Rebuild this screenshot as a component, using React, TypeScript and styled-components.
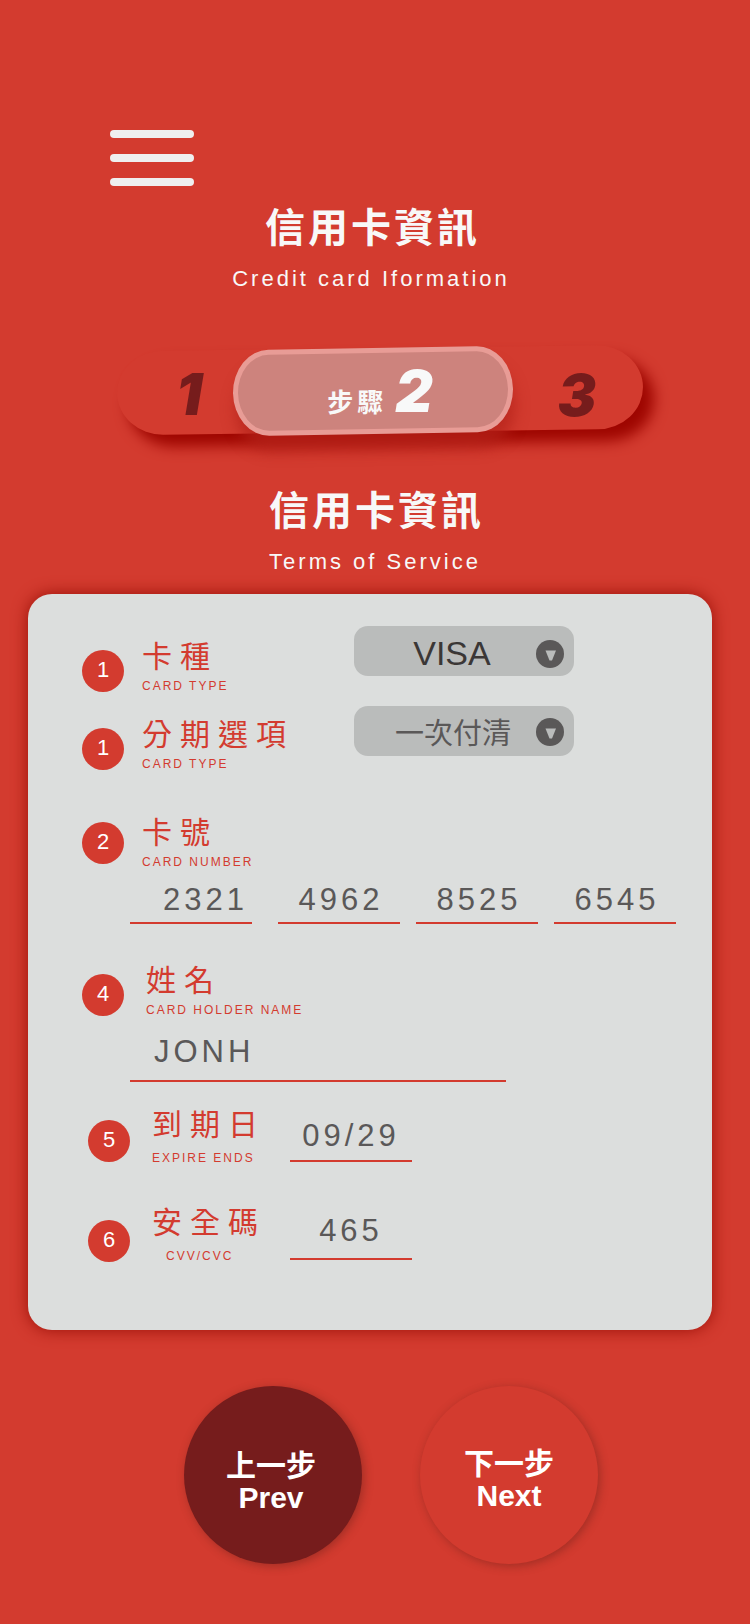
import React from 'react';
import styled, { createGlobalStyle } from 'styled-components';

const red = '#d33b2f';
const maroon = '#761c1c';
const paper = '#dcdedd';
const ink = '#5a5858';
const sans = '"Liberation Sans", Arial, "Noto Sans CJK TC", sans-serif';
const cjk = '"Noto Sans CJK TC", "Liberation Sans", sans-serif';

const GlobalStyle = createGlobalStyle`
  * { box-sizing: border-box; }
  body { margin: 0; background: ${red}; font-family: ${sans}; }
  h1, h2, p, ol { margin: 0; padding: 0; }
  button, input, select { font: inherit; color: inherit; border: 0; margin: 0; padding: 0; }
`;

const Page = styled.main`
  padding: 130px 0 60px;
`;

const MenuButton = styled.button`
  display: flex;
  flex-direction: column;
  gap: 16px;
  width: 84px;
  margin-left: 110px;
  background: none;
  cursor: pointer;
`;

const MenuBar = styled.span`
  height: 8px;
  border-radius: 4px;
  background: #efefef;
`;

const Heading = styled.header<{ $top: number; $shift?: number }>`
  display: flex;
  flex-direction: column;
  align-items: center;
  gap: 16px;
  padding-top: ${p => p.$top}px;
  padding-right: ${p => p.$shift ?? 0}px;
  color: #f8f8f8;
  text-align: center;
`;

const Title = styled.h1`
  padding-left: 3px;
  font: bold 40px/48px ${cjk};
  letter-spacing: 3px;
`;

const Subtitle = styled.p`
  font-size: 22px;
  line-height: 28px;
  letter-spacing: 3px;
`;

const Stepper = styled.ol`
  position: relative;
  z-index: 0;
  display: grid;
  grid-template-columns: 116px 280px 1fr;
  grid-template-rows: 86px;
  margin: 55px 107px 0 117px;
  list-style: none;

  &::before {
    content: '';
    position: absolute;
    inset: 0 0 2px;
    z-index: -2;
    border-radius: 46px / 42px;
    background: ${red};
    box-shadow: 11px 12px 14px #9e0600;
    transform: rotate(-0.7deg);
  }
`;

const Step = styled.li<{ $current?: boolean; $pad?: string }>`
  position: relative;
  display: flex;
  justify-content: center;
  align-items: ${p => (p.$current ? 'baseline' : 'center')};
  gap: 8px;
  padding: ${p => p.$pad ?? '0'};
  color: ${p => (p.$current ? '#f8f9f9' : maroon)};
  line-height: 86px;

  &::before {
    content: '';
    display: ${p => (p.$current ? 'block' : 'none')};
    position: absolute;
    inset: 0;
    z-index: -1;
    border: 5px solid #e89c96;
    border-radius: 36px / 43px;
    background: #cd837d;
    box-shadow: 2px 16px 14px rgba(180, 34, 26, 0.7);
    transform: rotate(-1deg);
  }
`;

const StepWord = styled.span`
  font-family: ${cjk};
  font-size: 26px;
  font-weight: bold;
  letter-spacing: 4px;
`;

const StepNumber = styled.span`
  font-family: Inter, "Liberation Sans", sans-serif;
  font-size: 58px;
  font-weight: 900;
  font-style: italic;
`;

const Card = styled.form`
  margin: 18px 38px 0 28px;
  padding: 32px 36px 66px 54px;
  border-radius: 24px;
  background: ${paper};
  box-shadow: 0 0 16px #9a1008;
`;

const Row = styled.div<{ $top?: number; $indent?: number }>`
  display: flex;
  margin-top: ${p => p.$top ?? 0}px;
  padding-left: ${p => p.$indent ?? 0}px;
`;

const Caption = styled.div<{ $width?: number; $top?: number; $gap?: number }>`
  display: flex;
  align-items: flex-end;
  flex: none;
  gap: ${p => p.$gap ?? 18}px;
  width: ${p => (p.$width ? `${p.$width}px` : 'auto')};
  padding-top: ${p => p.$top ?? 0}px;
`;

const Badge = styled.span<{ $lift?: number }>`
  flex: none;
  width: 42px;
  height: 42px;
  margin-bottom: ${p => p.$lift ?? 2}px;
  border-radius: 50%;
  background: ${red};
  color: #fff;
  font-size: 22px;
  line-height: 40px;
  text-align: center;
`;

const Label = styled.label<{ $gap?: number }>`
  display: flex;
  flex-direction: column;
  gap: ${p => p.$gap ?? 6}px;
  color: ${red};
  white-space: nowrap;
`;

const LabelZh = styled.span`
  font: 30px/36px ${cjk};
  letter-spacing: 8px;
`;

const LabelEn = styled.span<{ $indent?: number }>`
  padding-left: ${p => p.$indent ?? 0}px;
  font-size: 12px;
  line-height: 16px;
  letter-spacing: 2px;
`;

const SelectBox = styled.div`
  display: grid;
  align-self: flex-start;
  align-items: center;
  width: 220px;
  height: 50px;
`;

const Select = styled.select<{ $large?: boolean }>`
  grid-area: 1 / 1;
  appearance: none;
  width: 100%;
  height: 50px;
  padding: ${p => (p.$large ? '4px 24px 0 0' : '0 22px 0 0')};
  border-radius: 14px;
  background: #babcbb;
  color: ${p => (p.$large ? '#3b3736' : ink)};
  font-family: ${p => (p.$large ? sans : cjk)};
  font-size: ${p => (p.$large ? 34 : 29)}px;
  text-align: center;
  text-align-last: center;
`;

const Arrow = styled.svg<{ $large?: boolean }>`
  grid-area: 1 / 1;
  justify-self: end;
  width: 28px;
  height: 28px;
  margin: ${p => (p.$large ? '6px 10px 0 0' : '2px 10px 0 0')};
  pointer-events: none;
`;

const Entry = styled.input<{ $align?: string; $tall?: boolean }>`
  min-width: 0;
  width: 100%;
  height: ${p => (p.$tall ? 46 : 40)}px;
  padding: ${p => (p.$tall ? '0 24px 12px' : '0 4px 6px 8px')};
  border-bottom: 2px solid ${red};
  background: none;
  color: ${ink};
  font-size: 31px;
  letter-spacing: 4px;
  text-align: ${p => p.$align ?? 'center'};
  outline: none;
`;

const ShortEntry = styled(Entry)<{ $low?: boolean }>`
  align-self: flex-end;
  width: 122px;
  height: 44px;
  margin-bottom: 4px;
  padding: 0 0 ${p => (p.$low ? 6 : 12)}px;
`;

const NumberGroup = styled.div`
  display: flex;
  gap: 16px;
  margin-top: 14px;
  padding-left: 48px;

  & > :first-child { margin-right: 10px; }
`;

const NameGroup = styled.div`
  max-width: 424px;
  margin-top: 18px;
  padding-left: 48px;
`;

const Actions = styled.div`
  display: flex;
  justify-content: center;
  gap: 58px;
  padding: 56px 0 0 32px;
`;

const RoundButton = styled.button<{ $dark?: boolean }>`
  width: 178px;
  height: 178px;
  padding: ${p => (p.$dark ? '13px 4px 0 0' : '9px 0 0')};
  border-radius: 50%;
  background: ${p => (p.$dark ? maroon : red)};
  box-shadow: 2px 2px 10px rgba(100, 30, 25, 0.45);
  color: #fff;
  font-size: 30px;
  font-weight: bold;
  line-height: 32px;
  cursor: pointer;

  & > span { display: block; }
`;

function Dropdown({ id, value, large }: { id: string; value: string; large?: boolean }) {
  return (
    <SelectBox>
      <Select id={id} $large={large} defaultValue={value}>
        <option>{value}</option>
      </Select>
      <Arrow $large={large} viewBox="0 0 28 28" aria-hidden="true">
        <circle cx="14" cy="14" r="14" fill={ink} />
        <path d="M9.5 10.5h10.5L16 20.5h-2.5z" fill="#babcbb" />
      </Arrow>
    </SelectBox>
  );
}

const cardNumber = ['2321', '4962', '8525', '6545'];

export default function App() {
  return (
    <>
      <GlobalStyle />
      <Page>
        <MenuButton type="button" aria-label="Menu">
          <MenuBar />
          <MenuBar />
          <MenuBar />
        </MenuButton>

        <Heading $top={15} $shift={8}>
          <Title>信用卡資訊</Title>
          <Subtitle>Credit card Iformation</Subtitle>
        </Heading>

        <Stepper>
          <Step $pad="6px 0 0 28px"><StepNumber>1</StepNumber></Step>
          <Step $current aria-current="step" $pad="0 0 0 14px">
            <StepWord>步驟</StepWord>
            <StepNumber>2</StepNumber>
          </Step>
          <Step $pad="8px 2px 0 0"><StepNumber>3</StepNumber></Step>
        </Stepper>

        <Heading $top={50}>
          <Title as="h2">信用卡資訊</Title>
          <Subtitle>Terms of Service</Subtitle>
        </Heading>

        <Card>
          <Row>
            <Caption $width={272} $top={10}>
              <Badge>1</Badge>
              <Label htmlFor="card-type">
                <LabelZh>卡種</LabelZh>
                <LabelEn>CARD TYPE</LabelEn>
              </Label>
            </Caption>
            <Dropdown id="card-type" value="VISA" large />
          </Row>

          <Row $top={12}>
            <Caption $width={272} $top={8}>
              <Badge>1</Badge>
              <Label htmlFor="instalment">
                <LabelZh>分期選項</LabelZh>
                <LabelEn>CARD TYPE</LabelEn>
              </Label>
            </Caption>
            <Dropdown id="instalment" value="一次付清" />
          </Row>

          <Row $top={40}>
            <Caption>
              <Badge $lift={6}>2</Badge>
              <Label htmlFor="number-0">
                <LabelZh>卡號</LabelZh>
                <LabelEn>CARD NUMBER</LabelEn>
              </Label>
            </Caption>
          </Row>
          <NumberGroup>
            {cardNumber.map((part, i) => (
              <Entry
                key={i}
                id={`number-${i}`}
                aria-label={`Card number part ${i + 1}`}
                inputMode="numeric"
                $align={i === 0 ? 'right' : 'center'}
                defaultValue={part}
              />
            ))}
          </NumberGroup>

          <Row $top={36}>
            <Caption $gap={22}>
              <Badge>4</Badge>
              <Label htmlFor="holder">
                <LabelZh>姓名</LabelZh>
                <LabelEn>CARD HOLDER NAME</LabelEn>
              </Label>
            </Caption>
          </Row>
          <NameGroup>
            <Entry id="holder" $tall $align="left" defaultValue="JONH" />
          </NameGroup>

          <Row $top={22} $indent={6}>
            <Caption $width={202} $gap={22}>
              <Badge $lift={4}>5</Badge>
              <Label htmlFor="expiry" $gap={10}>
                <LabelZh>到期日</LabelZh>
                <LabelEn>EXPIRE ENDS</LabelEn>
              </Label>
            </Caption>
            <ShortEntry id="expiry" $low defaultValue="09/29" />
          </Row>

          <Row $top={36} $indent={6}>
            <Caption $width={202} $gap={22}>
              <Badge>6</Badge>
              <Label htmlFor="cvv" $gap={10}>
                <LabelZh>安全碼</LabelZh>
                <LabelEn $indent={14}>CVV/CVC</LabelEn>
              </Label>
            </Caption>
            <ShortEntry id="cvv" inputMode="numeric" defaultValue="465" />
          </Row>
        </Card>

        <Actions>
          <RoundButton type="button" $dark>
            <span>上一步</span>
            <span>Prev</span>
          </RoundButton>
          <RoundButton type="button">
            <span>下一步</span>
            <span>Next</span>
          </RoundButton>
        </Actions>
      </Page>
    </>
  );
}
